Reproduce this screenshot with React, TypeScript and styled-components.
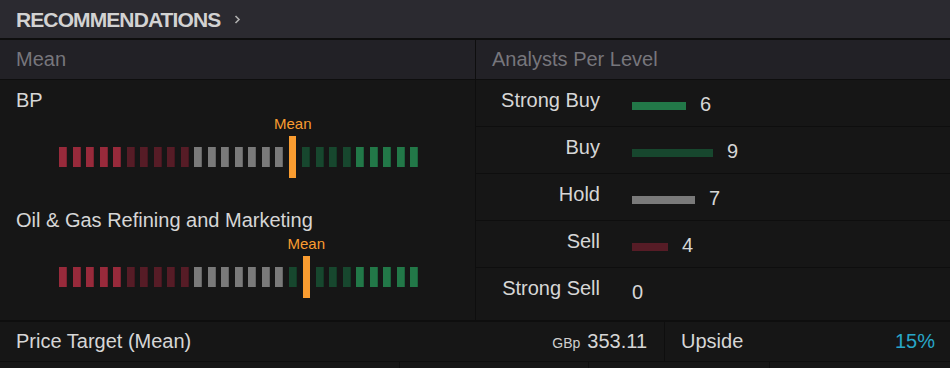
import React from 'react'
import styled, { createGlobalStyle } from 'styled-components'

const COLORS = {
  strongSell: '#982a3b',
  sell: '#561c26',
  hold: '#7a7a7a',
  buy: '#17472e',
  strongBuy: '#227848',
  marker: '#f99c30',
}

type Level = keyof typeof COLORS

const SEGMENTS: Level[] = [
  ...Array(5).fill('strongSell'),
  ...Array(5).fill('sell'),
  ...Array(7).fill('hold'),
  ...Array(4).fill('buy'),
  ...Array(5).fill('strongBuy'),
]

const GAUGES = [
  { name: 'BP', markerAt: 17 },
  { name: 'Oil & Gas Refining and Marketing', markerAt: 18 },
]

const LEVELS: { label: string; count: number; level: Level }[] = [
  { label: 'Strong Buy', count: 6, level: 'strongBuy' },
  { label: 'Buy', count: 9, level: 'buy' },
  { label: 'Hold', count: 7, level: 'hold' },
  { label: 'Sell', count: 4, level: 'sell' },
  { label: 'Strong Sell', count: 0, level: 'strongSell' },
]

const GlobalStyle = createGlobalStyle`
  body {
    margin: 0;
    background: #161616;
    font-family: "Liberation Sans", Arial, sans-serif;
    color: #d6d6d6;
  }
`

const Chevron = () => (
  <svg width="7" height="9" viewBox="0 0 7 9">
    <path d="M1.5 1 L5 4.5 L1.5 8" stroke="#b0b0b0" strokeWidth="1.6" fill="none" />
  </svg>
)

const Gauge = ({ markerAt }: { markerAt: number }) => {
  const slots: React.ReactNode[] = SEGMENTS.map((level, i) => (
    <Segment key={i} $color={COLORS[level]} />
  ))
  slots.splice(
    markerAt,
    0,
    <MarkerSlot key="marker">
      <MarkerLabel>Mean</MarkerLabel>
      <MarkerBar />
    </MarkerSlot>
  )
  return <Track>{slots}</Track>
}

export default function App() {
  return (
    <>
      <GlobalStyle />
      <Widget>
        <Header>
          <Title>RECOMMENDATIONS</Title>
          <Chevron />
        </Header>
        <Columns>
          <SubHeader>Mean</SubHeader>
          <SubHeader>Analysts Per Level</SubHeader>
        </Columns>
        <Body>
          <MeanPanel>
            {GAUGES.map((g) => (
              <GaugeBlock key={g.name}>
                <EntityName>{g.name}</EntityName>
                <Gauge markerAt={g.markerAt} />
              </GaugeBlock>
            ))}
          </MeanPanel>
          <LevelPanel>
            {LEVELS.map((l) => (
              <LevelRow key={l.label}>
                <LevelLabel>{l.label}</LevelLabel>
                <LevelValue>
                  {l.count > 0 && (
                    <LevelBar
                      $color={COLORS[l.level]}
                      style={{ width: l.count * 9 }}
                    />
                  )}
                  <span>{l.count}</span>
                </LevelValue>
              </LevelRow>
            ))}
          </LevelPanel>
        </Body>
        <Footer>
          <FooterCell>
            <span>Price Target (Mean)</span>
            <Price>
              <Currency>GBp</Currency>353.11
            </Price>
          </FooterCell>
          <FooterCell>
            <span>Upside</span>
            <Upside>15%</Upside>
          </FooterCell>
        </Footer>
        <NextRow>
          <div />
          <div />
          <div />
          <div />
        </NextRow>
      </Widget>
    </>
  )
}

const Widget = styled.div`
  width: 950px;
  background: #161616;
`

const Header = styled.div`
  height: 38px;
  display: flex;
  align-items: center;
  gap: 14px;
  padding: 0 16px;
  background: #2b2a30;
  border-bottom: 2px solid #0e0e0e;
`

const Title = styled.div`
  font-size: 21px;
  font-weight: bold;
  letter-spacing: -0.9px;
  color: #d2d2d2;
  line-height: 24px;
  padding-top: 2px;
`

const Columns = styled.div`
  display: grid;
  grid-template-columns: 475px 1fr;
  background: #222126;
  border-bottom: 1px solid #0e0e0e;
`

const SubHeader = styled.div`
  height: 39px;
  display: flex;
  align-items: center;
  padding-left: 16px;
  font-size: 20px;
  color: #77767c;
  & + & {
    border-left: 1px solid #0e0e0e;
  }
`

const Body = styled.div`
  display: grid;
  grid-template-columns: 475px 1fr;
  height: 240px;
`

const MeanPanel = styled.div`
  display: flex;
  flex-direction: column;
  gap: 30px;
  padding: 8px 0 0 16px;
`

const GaugeBlock = styled.div`
  display: flex;
  flex-direction: column;
  gap: 4px;
`

const EntityName = styled.div`
  font-size: 20px;
  line-height: 24px;
  color: #d6d6d6;
`

const Track = styled.div`
  display: flex;
  align-items: flex-end;
  gap: 5.53px;
  margin-left: 43px;
`

const Segment = styled.div<{ $color: string }>`
  width: 8px;
  height: 20px;
  margin-bottom: 11px;
  background: ${(p) => p.$color};
  box-shadow: inset -1px 0 0 rgba(0, 0, 0, 0.18);
`

const MarkerSlot = styled.div`
  width: 8px;
  display: flex;
  flex-direction: column;
  align-items: center;
  gap: 4px;
`

const MarkerLabel = styled.div`
  font-size: 15px;
  line-height: 16px;
  color: ${COLORS.marker};
  white-space: nowrap;
`

const MarkerBar = styled.div`
  width: 7px;
  height: 42px;
  background: ${COLORS.marker};
`

const LevelPanel = styled.div`
  display: flex;
  flex-direction: column;
  border-left: 1px solid #0e0e0e;
`

const LevelRow = styled.div`
  height: 47px;
  display: flex;
  align-items: flex-start;
  padding-top: 8px;
  box-sizing: border-box;
  border-bottom: 1px solid #0e0e0e;
  &:last-child {
    flex: 1;
    border-bottom: none;
  }
`

const LevelLabel = styled.div`
  width: 124px;
  text-align: right;
  font-size: 20px;
  line-height: 24px;
  color: #d6d6d6;
`

const LevelValue = styled.div`
  display: flex;
  align-items: flex-start;
  gap: 14px;
  margin: 4px 0 0 32px;
  font-size: 20px;
  line-height: 24px;
  color: #d6d6d6;
`

const LevelBar = styled.div<{ $color: string }>`
  height: 8px;
  margin-top: 10px;
  background: ${(p) => p.$color};
`

const Footer = styled.div`
  display: grid;
  grid-template-columns: 664px 1fr;
  border-top: 2px solid #0e0e0e;
  border-bottom: 1px solid #0e0e0e;
`

const FooterCell = styled.div`
  height: 39px;
  display: flex;
  align-items: center;
  justify-content: space-between;
  padding: 0 16px;
  font-size: 20px;
  color: #d6d6d6;
  &:first-child {
    padding-right: 17px;
  }
  & + & {
    border-left: 1px solid #0e0e0e;
    padding-right: 15px;
  }
`

const Price = styled.span`
  display: flex;
  align-items: baseline;
`

const Currency = styled.span`
  font-size: 14px;
  margin-right: 7px;
  color: #cfcfcf;
`

const Upside = styled.span`
  color: #28a6c8;
`

const NextRow = styled.div`
  display: grid;
  grid-template-columns: 399px 189px 181px 1fr;
  height: 30px;
  & > div + div {
    border-left: 1px solid #0e0e0e;
  }
`
